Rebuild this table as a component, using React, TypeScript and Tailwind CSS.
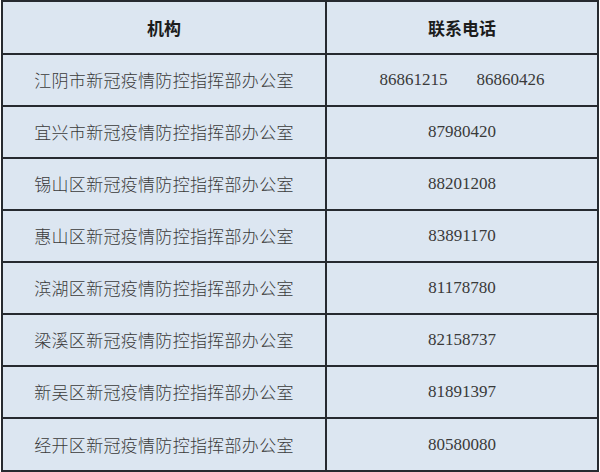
import React from "react";

const rows: [string, React.ReactNode][] = [
  ["江阴市新冠疫情防控指挥部办公室", <span className="flex gap-[29px]"><span>86861215</span><span>86860426</span></span>],
  ["宜兴市新冠疫情防控指挥部办公室", "87980420"],
  ["锡山区新冠疫情防控指挥部办公室", "88201208"],
  ["惠山区新冠疫情防控指挥部办公室", "83891170"],
  ["滨湖区新冠疫情防控指挥部办公室", "81178780"],
  ["梁溪区新冠疫情防控指挥部办公室", "82158737"],
  ["新吴区新冠疫情防控指挥部办公室", "81891397"],
  ["经开区新冠疫情防控指挥部办公室", "80580080"],
];

export default function App() {
  return (
    <div className="w-[600px] h-[472px] bg-white overflow-hidden">
      <div className="ml-[1px] w-[598px] h-[472px] border-2 border-[#262a30] bg-[#dce6f1] flex flex-col">
        <div className="grid grid-cols-[324px_1fr] h-[53px] border-b-2 border-[#262a30] shrink-0">
          <div className="border-r-2 border-[#262a30] flex items-center justify-center text-[17px] font-bold text-[#1c1c1c] [font-family:'Noto_Sans_CJK_SC',sans-serif]">
            机构
          </div>
          <div className="flex items-center justify-center text-[17px] font-bold text-[#1c1c1c] [font-family:'Noto_Sans_CJK_SC',sans-serif]">
            联系电话
          </div>
        </div>
        {rows.map(([name, phone], i) => (
          <div
            key={i}
            className={`grid grid-cols-[324px_1fr] shrink-0 ${i < rows.length - 1 ? "h-[52px] border-b-2 border-[#262a30]" : "flex-1"}`}
          >
            <div className="border-r-2 border-[#262a30] flex items-center justify-center text-[17px] tracking-[0.3px] text-[#3a3a3a] [font-family:'Noto_Sans_CJK_SC',sans-serif] font-light">
              {name}
            </div>
            <div className="flex items-center justify-center text-[17px] text-[#3a3a3a] [font-family:'Liberation_Serif',serif]">
              {phone}
            </div>
          </div>
        ))}
      </div>
    </div>
  );
}
